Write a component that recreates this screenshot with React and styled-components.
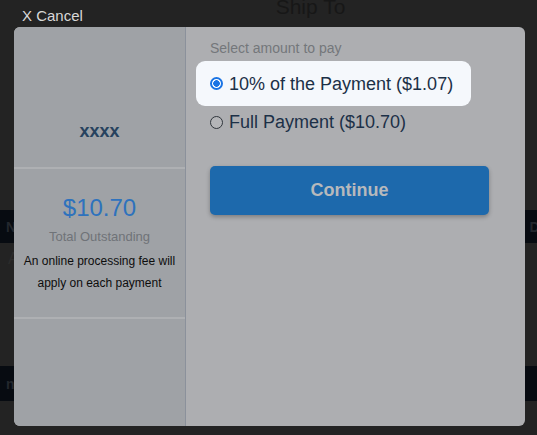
import React, { useState } from "react";
import styled, { createGlobalStyle } from "styled-components";

const Global = createGlobalStyle`
  html, body {
    margin: 0;
    padding: 0;
    background: #232323;
    font-family: "Liberation Sans", Arial, Helvetica, sans-serif;
  }
  * { box-sizing: border-box; }
`;

/* ---------- page underneath the dialog ---------- */

const Page = styled.div`
  position: relative;
  width: 537px;
  height: 435px;
  overflow: hidden;
  background: #232323;
`;

const PageTitle = styled.h1`
  margin: -5px 0 0;
  padding-left: 84px;
  text-align: center;
  font-size: 21px;
  font-weight: 400;
  line-height: 24px;
  color: #171717;
`;

const NavBand = styled.div`
  margin-top: ${(p) => p.$top}px;
  height: ${(p) => p.$h}px;
  background: #070b11;
  display: flex;
  align-items: center;
  justify-content: space-between;
  padding: 0 0 0 6px;
  font-size: 14px;
  font-weight: 700;
  color: #23272d;
  white-space: nowrap;
`;

const NavTail = styled.span`
  margin-right: -26px;
`;

const FaintText = styled.div`
  margin-top: ${(p) => p.$top}px;
  padding-left: ${(p) => p.$left}px;
  font-size: ${(p) => p.$size}px;
  line-height: 20px;
  color: ${(p) => p.$color || "#2c2c2c"};
  font-weight: ${(p) => p.$weight || 400};
`;

/* ---------- dialog overlay ---------- */

const Overlay = styled.div`
  position: absolute;
  inset: 0;
  display: flex;
  flex-direction: column;
  align-items: flex-start;
  padding-top: 7px;
`;

const CancelLink = styled.button`
  margin-left: 22px;
  padding: 0;
  border: 0;
  background: none;
  font-family: inherit;
  font-size: 15px;
  line-height: 18px;
  color: #d8d8d8;
  cursor: pointer;
`;

const Dialog = styled.div`
  margin: 2px 0 0 14px;
  width: 511px;
  height: 399px;
  border-radius: 6px;
  overflow: hidden;
  display: grid;
  grid-template-columns: 172px 1fr;
  background: #adaeb1;
`;

const Summary = styled.aside`
  background: #9fa2a6;
  border-right: 1px solid #8b919b;
  display: flex;
  flex-direction: column;
  text-align: center;
`;

const SummaryBlock = styled.div`
  border-bottom: 2px solid #aeb0b3;
  display: flex;
  flex-direction: column;
  align-items: center;
  justify-content: ${(p) => (p.$bottom ? "flex-end" : "flex-start")};
  height: ${(p) => p.$h}px;
  padding: ${(p) => p.$pad};
`;

const AccountName = styled.div`
  font-size: 18px;
  font-weight: 700;
  line-height: 20px;
  color: #27425e;
`;

const Amount = styled.div`
  font-size: 24px;
  line-height: 28px;
  color: #2e72bd;
`;

const AmountCaption = styled.div`
  margin-top: 7px;
  font-size: 13px;
  line-height: 16px;
  color: #6f7378;
`;

const FeeNote = styled.p`
  margin: 5px 0 0;
  font-size: 12px;
  line-height: 22px;
  color: #0d0d0d;
`;

const PayPanel = styled.section`
  padding: 13px 35px 0 24px;
  display: flex;
  flex-direction: column;
  align-items: flex-start;
`;

const PanelLabel = styled.div`
  font-size: 14px;
  line-height: 16px;
  color: #74777b;
`;

const OptionList = styled.div`
  margin-top: 5px;
  display: flex;
  flex-direction: column;
  align-items: flex-start;
`;

const Option = styled.label`
  display: flex;
  align-items: center;
  gap: 6px;
  font-size: 18px;
  line-height: 22px;
  color: #1c3047;
  cursor: pointer;
  ${(p) =>
    p.$active
      ? `
    margin-left: -14px;
    height: 45px;
    padding: 0 18px 0 14px;
    background: #f5f8fc;
    border-radius: 9px;
  `
      : `
    height: 32px;
  `}
`;

const Radio = styled.input.attrs({ type: "radio" })`
  appearance: none;
  margin: 0;
  width: 13px;
  height: 13px;
  flex: none;
  border-radius: 50%;
  border: 1px solid #30363c;
  background: #b4b5b8;
  &:checked {
    border: 2px solid #1b74e4;
    background: radial-gradient(circle, #1b74e4 0 3px, #ffffff 3.6px);
  }
`;

const ContinueButton = styled.button`
  margin-top: 28px;
  width: 279px;
  height: 49px;
  border: 0;
  border-radius: 5px;
  background: #1d69ac;
  box-shadow: 0 2px 4px rgba(0, 0, 0, 0.28);
  font-family: inherit;
  font-size: 18px;
  font-weight: 700;
  color: #b7b9bc;
  cursor: pointer;
`;

const options = [
  { id: "partial", label: "10% of the Payment ($1.07)" },
  { id: "full", label: "Full Payment ($10.70)" },
];

export default function App() {
  const [choice, setChoice] = useState("partial");

  return (
    <>
      <Global />
      <Page>
        <PageTitle>Ship To</PageTitle>
        <NavBand $top={191} $h={33}>
          <span>N</span>
          <NavTail>DISC</NavTail>
        </NavBand>
        <FaintText $top={6} $left={8} $size={16}>
          A
        </FaintText>
        <NavBand $top={97} $h={35}>
          <span>n</span>
          <span />
        </NavBand>
        <FaintText $top={30} $left={288} $size={14} $weight={700} $color="#1c1c1c">
          PAYMENT TOTAL
        </FaintText>

        <Overlay>
          <CancelLink>X Cancel</CancelLink>
          <Dialog>
            <Summary>
              <SummaryBlock $h={142} $bottom $pad="0 0 26px">
                <AccountName>xxxx</AccountName>
              </SummaryBlock>
              <SummaryBlock $h={150} $pad="25px 8px 0">
                <Amount>$10.70</Amount>
                <AmountCaption>Total Outstanding</AmountCaption>
                <FeeNote>An online processing fee will apply on each payment</FeeNote>
              </SummaryBlock>
            </Summary>

            <PayPanel>
              <PanelLabel>Select amount to pay</PanelLabel>
              <OptionList>
                {options.map((o) => (
                  <Option key={o.id} $active={choice === o.id}>
                    <Radio
                      name="amount"
                      checked={choice === o.id}
                      onChange={() => setChoice(o.id)}
                    />
                    {o.label}
                  </Option>
                ))}
              </OptionList>
              <ContinueButton>Continue</ContinueButton>
            </PayPanel>
          </Dialog>
        </Overlay>
      </Page>
    </>
  );
}
